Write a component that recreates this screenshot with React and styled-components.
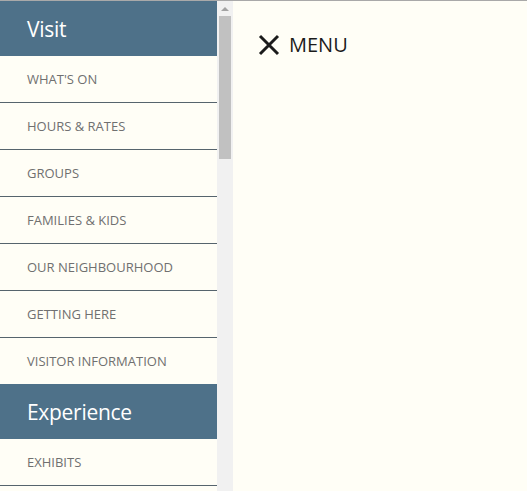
import styled, { createGlobalStyle } from 'styled-components';

const GlobalStyle = createGlobalStyle`
    html, body {
        margin: 0;
        padding: 0;
        height: 100%;
        overflow: hidden;
        background: #fffef6;
    }
    #root {
        height: 100%;
    }
`;

const Page = styled.div`
    display: flex;
    height: 100vh;
    border-top: 1px solid #a9a9a9;
    box-sizing: border-box;
    background: #fffef6;
    font-family: "Open Sans", "Liberation Sans", sans-serif;
`;

const Sidebar = styled.div`
    display: flex;
    flex-shrink: 0;
    height: 100%;
`;

const NavList = styled.nav`
    width: 217px;
    overflow: hidden;
    background: #fffef6;
`;

const ScrollTrack = styled.div`
    width: 16px;
    background: #f1f1f1;
    display: flex;
    flex-direction: column;
    align-items: center;
`;

const ScrollArrow = styled.div`
    height: 15px;
    display: flex;
    align-items: center;
    justify-content: center;
`;

const ScrollThumb = styled.div`
    width: 12px;
    height: 143px;
    background: #c1c1c1;
`;

const SectionTitle = styled.div`
    height: 55px;
    display: flex;
    align-items: center;
    padding-left: 27px;
    background: #4e7189;
    color: #ffffff;
    font-size: 21px;
    letter-spacing: -0.3px;
`;

const Item = styled.a`
    display: flex;
    align-items: center;
    height: 46px;
    padding-left: 27px;
    border-bottom: ${(p) => (p.$last ? 'none' : '1px solid #56646d')};
    color: #707070;
    font-size: 13px;
    text-transform: uppercase;
    text-decoration: none;
`;

const Main = styled.main`
    flex: 1;
    padding: 30px 0 0 25px;
`;

const MenuButton = styled.button`
    display: flex;
    align-items: center;
    gap: 9px;
    border: none;
    background: none;
    padding: 0;
    color: #1b1b1b;
    font-family: "Open Sans", "Liberation Sans", sans-serif;
    font-size: 20px;
    cursor: pointer;
`;

const sections = [
    {
        title: 'Visit',
        items: ["What's on", 'Hours & rates', 'Groups', 'Families & kids', 'Our neighbourhood', 'Getting here', 'Visitor information'],
    },
    {
        title: 'Experience',
        items: ['Exhibits'],
        open: true,
    },
];

const App = () => {
    return (
        <>
            <GlobalStyle />
            <Page>
                <Sidebar>
                    <NavList>
                        {sections.map((s) => (
                            <div key={s.title}>
                                <SectionTitle>{s.title}</SectionTitle>
                                {s.items.map((it, i) => (
                                    <Item key={it} href="#" $last={!s.open && i === s.items.length - 1}>
                                        {it}
                                    </Item>
                                ))}
                            </div>
                        ))}
                    </NavList>
                    <ScrollTrack>
                        <ScrollArrow>
                            <svg width="8" height="5" viewBox="0 0 8 5">
                                <path d="M0 5 L4 1 L8 5 Z" fill="#a3a3a3" />
                            </svg>
                        </ScrollArrow>
                        <ScrollThumb />
                    </ScrollTrack>
                </Sidebar>
                <Main>
                    <MenuButton>
                        <svg width="22" height="22" viewBox="0 0 22 22">
                            <path d="M2 2 L20 20 M20 2 L2 20" stroke="#1b1b1b" strokeWidth="3" fill="none" />
                        </svg>
                        MENU
                    </MenuButton>
                </Main>
            </Page>
        </>
    );
};

export default App;
